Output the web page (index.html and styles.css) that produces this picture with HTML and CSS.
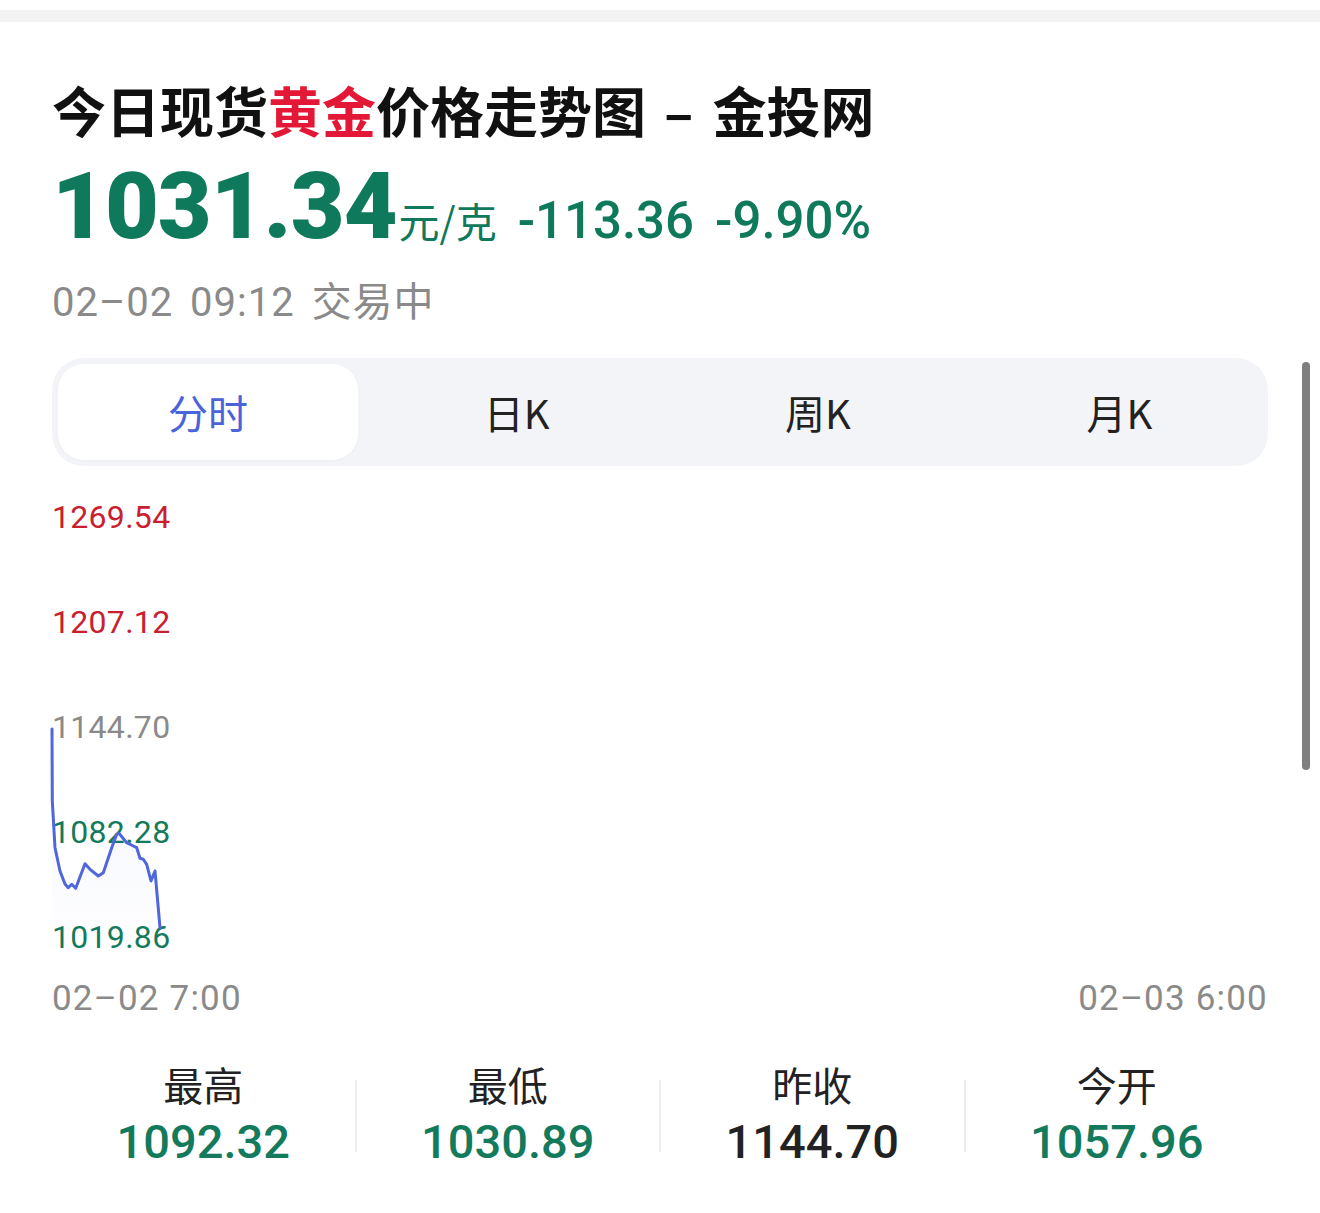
FILE: index.html
```html
<!DOCTYPE html>
<html lang="zh-CN">
<head>
<meta charset="utf-8">
<title>今日现货黄金价格走势图 – 金投网</title>
<link rel="stylesheet" href="styles.css">
</head>
<body>
<div class="topbar"></div>
<main class="wrap">
  <h1 class="title">今日现货<span class="hl">黄金</span>价格走势图<span class="dash">–</span>金投网</h1>
  <div class="price-row">
    <span class="price">1031.34</span>
    <span class="unit">元/克</span>
    <span class="chg">-113.36</span>
    <span class="chg">-9.90%</span>
  </div>
  <div class="status">02–02 09:12 交易中</div>

  <nav class="tabs">
    <div class="tab active">分时</div>
    <div class="tab">日K</div>
    <div class="tab">周K</div>
    <div class="tab">月K</div>
  </nav>

  <section class="chart">
    <div class="ylabel up">1269.54</div>
    <div class="ylabel up">1207.12</div>
    <div class="ylabel flat">1144.70</div>
    <div class="ylabel down">1082.28</div>
    <div class="ylabel down">1019.86</div>
    <svg class="line" width="1216" height="492" viewBox="0 0 1216 492">
      <defs>
        <linearGradient id="fillg" x1="0" y1="0" x2="0" y2="1">
          <stop offset="0" stop-color="#5068dd" stop-opacity="0.07"/>
          <stop offset="1" stop-color="#5068dd" stop-opacity="0"/>
        </linearGradient>
      </defs>
      <polygon fill="url(#fillg)" points="0,263 0.3,335 3,381.7 8,405 13,418 16.3,421.7 19.7,418.3 23.7,422.3 33,397.7 38,403.3 46.3,410 51.3,406.7 59.7,381.7 64.7,368.3 67,367.3 74.7,376.7 81.3,380 84.7,381.7 88,392.3 91.3,393.3 94.7,398.3 99,415 103,405 108,461.7 108,492 0,492"/>
      <polyline fill="none" stroke="#4f66dc" stroke-width="3" stroke-linejoin="round" stroke-linecap="round" points="0,263 0.3,335 3,381.7 8,405 13,418 16.3,421.7 19.7,418.3 23.7,422.3 33,397.7 38,403.3 46.3,410 51.3,406.7 59.7,381.7 64.7,368.3 67,367.3 74.7,376.7 81.3,380 84.7,381.7 88,392.3 91.3,393.3 94.7,398.3 99,415 103,405 108,461.7"/>
    </svg>
  </section>

  <div class="xaxis">
    <span>02–02 7:00</span>
    <span>02–03 6:00</span>
  </div>

  <section class="stats">
    <div class="stat">
      <div class="stat-label">最高</div>
      <div class="stat-val down">1092.32</div>
    </div>
    <div class="sep"></div>
    <div class="stat">
      <div class="stat-label">最低</div>
      <div class="stat-val down">1030.89</div>
    </div>
    <div class="sep"></div>
    <div class="stat">
      <div class="stat-label">昨收</div>
      <div class="stat-val">1144.70</div>
    </div>
    <div class="sep"></div>
    <div class="stat">
      <div class="stat-label">今开</div>
      <div class="stat-val down">1057.96</div>
    </div>
  </section>
</main>
<div class="scrollbar"></div>
</body>
</html>
```

FILE: styles.css
```css
html, body {
  margin: 0;
  padding: 0;
  background: #ffffff;
}

body {
  font-family: "Roboto", "Noto Sans CJK SC", sans-serif;
  color: #1c1c1c;
  position: relative;
  min-height: 1213px;
  overflow: hidden;
}

.topbar {
  margin-top: 10px;
  height: 12px;
  background: #f3f3f3;
}

.wrap {
  padding: 0 52px;
}

.title {
  margin: 53px 0 0;
  font-family: "Noto Sans CJK SC", sans-serif;
  font-weight: 700;
  font-size: 54px;
  line-height: 70px;
  color: #111111;
  white-space: nowrap;
}

.title .hl {
  color: #e31837;
}

.title .dash {
  display: inline-block;
  margin: 0 19px 0 18px;
}

.price-row {
  display: flex;
  align-items: baseline;
  height: 100px;
  margin-top: 12px;
  line-height: 100px;
  color: #0e7a5b;
  white-space: nowrap;
}

.price {
  font-family: "Roboto", sans-serif;
  font-weight: 900;
  font-size: 93px;
  letter-spacing: -1px;
}

.unit {
  font-family: "Noto Sans CJK SC", sans-serif;
  font-size: 41px;
  margin-left: 2px;
}

.chg {
  font-family: "Roboto", sans-serif;
  font-weight: 500;
  font-size: 51px;
  margin-left: 21px;
}

.status {
  margin-top: 11px;
  font-size: 40px;
  line-height: 70px;
  color: #8a8a8a;
  letter-spacing: 1px;
  word-spacing: 6px;
  white-space: nowrap;
}

.tabs {
  margin-top: 20px;
  height: 108px;
  box-sizing: border-box;
  padding: 6px;
  background: #f3f4f8;
  border-radius: 32px;
  display: grid;
  grid-template-columns: 300px 1fr 1fr 1fr;
}

.tab {
  display: flex;
  align-items: center;
  justify-content: center;
  font-family: "Noto Sans CJK SC", sans-serif;
  font-size: 40px;
  color: #222222;
  padding-left: 16px;
}

.tab.active {
  padding-left: 0;
  background: #ffffff;
  border-radius: 26px;
  color: #4a63d8;
  box-shadow: 0 1px 3px rgba(0, 0, 0, 0.03);
}

.chart {
  position: relative;
  height: 492px;
  box-sizing: border-box;
  padding-top: 31px;
  display: flex;
  flex-direction: column;
  gap: 65px;
}

.ylabel {
  font-size: 32px;
  line-height: 40px;
  height: 40px;
  letter-spacing: 0.3px;
}

.up { color: #c9202f; }
.flat { color: #8a8a8a; }
.down { color: #137a5b; }

.line {
  position: absolute;
  left: 0;
  top: 0;
  overflow: visible;
}

.xaxis {
  margin-top: 21px;
  display: flex;
  justify-content: space-between;
  font-size: 35px;
  line-height: 40px;
  color: #8a8a8a;
  letter-spacing: 1.2px;
}

.stats {
  margin-top: 40px;
  display: flex;
  align-items: center;
}

.stat {
  flex: 1;
  text-align: center;
}

.stat-label {
  font-family: "Noto Sans CJK SC", sans-serif;
  font-size: 40px;
  line-height: 50px;
  color: #222222;
}

.stat-val {
  margin-top: 3px;
  font-family: "Roboto", sans-serif;
  font-weight: 500;
  font-size: 47px;
  line-height: 60px;
  color: #222222;
}

.stat-val.down {
  color: #137a5b;
}

.sep {
  width: 2px;
  height: 72px;
  background: #ececec;
}

.scrollbar {
  position: absolute;
  left: 1302px;
  top: 362px;
  width: 8px;
  height: 408px;
  border-radius: 4px;
  background: #7f7f7f;
}
```
